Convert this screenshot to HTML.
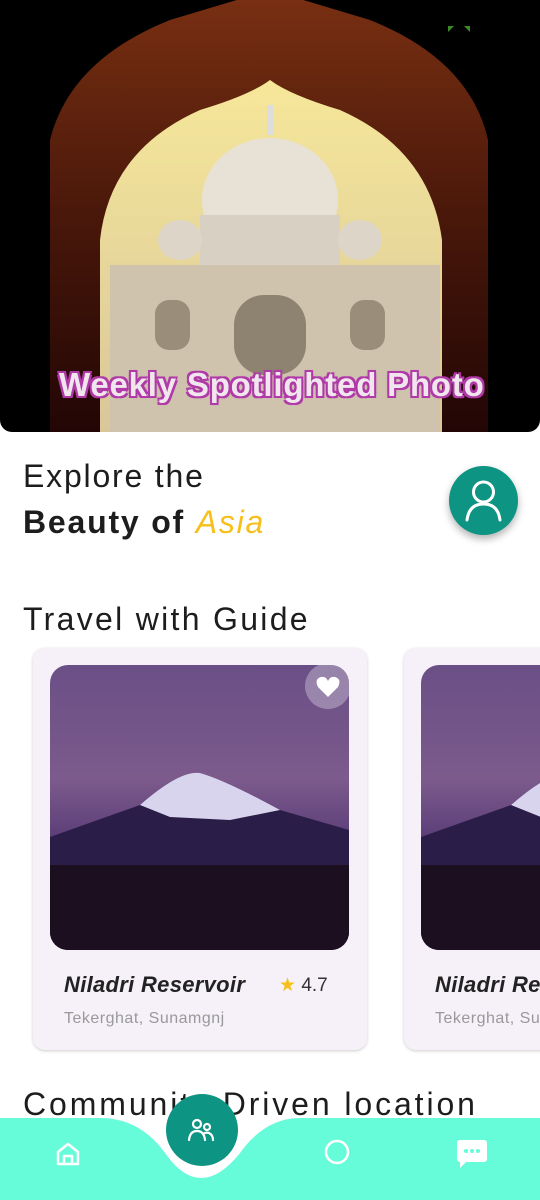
<!DOCTYPE html>
<html><head><meta charset="utf-8"><style>
*{margin:0;padding:0;box-sizing:border-box}
html,body{width:540px;height:1200px;overflow:hidden}
body{background:#fff;font-family:"Liberation Sans",sans-serif;position:relative}
.wrap{position:absolute;left:0;top:0;width:540px;height:1200px;overflow:hidden}
.hero{position:absolute;left:0;top:0;width:540px;height:432px;background:#000;border-radius:0 0 12px 12px;overflow:hidden}
.t{position:absolute;color:#1d1d1d;letter-spacing:1.8px}
.card{position:absolute;top:648px;width:334px;height:402px;background:#f6f0f8;border-radius:12px;box-shadow:0 1px 3px rgba(0,0,0,.2);overflow:hidden}
.img{position:absolute;left:17px;top:17px;width:299px;height:285px;border-radius:18px;overflow:hidden;background:linear-gradient(#6a4f86 0%,#7c5a8c 40%,#5d3f79 60%,#24163a 75%,#1a0f22 100%)}
</style></head><body><div class="wrap">
<div class="hero">
<svg width="540" height="432" viewBox="0 0 540 432">
<defs>
<linearGradient id="sky" x1="0" y1="0" x2="0" y2="1"><stop offset="0" stop-color="#f6e79a"/><stop offset="1" stop-color="#d9c79a"/></linearGradient>
<linearGradient id="arch" x1="0" y1="0" x2="0" y2="1"><stop offset="0" stop-color="#7a3012"/><stop offset="0.5" stop-color="#4a180a"/><stop offset="1" stop-color="#220605"/></linearGradient>
</defs>
<path d="M50 432 L50 140 Q70 60 170 20 L270 -10 L370 20 Q470 60 488 140 L488 432 Z" fill="url(#arch)"/>
<path d="M100 432 L100 240 Q110 150 200 110 Q250 95 270 80 Q290 95 340 110 Q430 150 442 240 L442 432 Z" fill="url(#sky)"/>
<rect x="110" y="265" width="330" height="167" fill="#cfc3ae"/>
<ellipse cx="270" cy="200" rx="68" ry="62" fill="#e8e2d6"/>
<rect x="200" y="215" width="140" height="50" fill="#d8d0c2"/>
<ellipse cx="180" cy="240" rx="22" ry="20" fill="#ddd6c8"/>
<ellipse cx="360" cy="240" rx="22" ry="20" fill="#ddd6c8"/>
<rect x="234" y="295" width="72" height="80" rx="30" fill="#8e8270"/>
<rect x="155" y="300" width="35" height="50" rx="14" fill="#9a8e7a"/>
<rect x="350" y="300" width="35" height="50" rx="14" fill="#9a8e7a"/>
<rect x="267" y="105" width="6" height="30" fill="#ddd"/>
<path d="M448 26 l6 0 -6 6z M470 26 l-6 0 6 6z" fill="#3a8a2a"/>
</svg>
<div style="position:absolute;left:59px;top:366px;font-size:33px;font-weight:bold;color:#f2e6ee;letter-spacing:0.8px;text-shadow:0 0 3px #b03aa8,2px 2px 0 #b03aa8,-2px -2px 0 #b03aa8,2px -2px 0 #b03aa8,-2px 2px 0 #b03aa8">Weekly Spotlighted Photo</div>
</div>
<div class="t" style="left:23px;top:458px;font-size:32px">Explore the</div>
<div class="t" style="left:23px;top:504px;font-size:32px;font-weight:bold">Beauty of <i style="color:#f8bf1a;font-weight:normal">Asia</i></div>
<div style="position:absolute;left:449px;top:466px;width:69px;height:69px;border-radius:50%;background:#0e9483;box-shadow:0 4px 8px rgba(0,0,0,.3)">
<svg width="69" height="69"><circle cx="34.5" cy="26" r="10" fill="none" stroke="#fff" stroke-width="3"/><path d="M18 54 Q20 38 34.5 38 Q49 38 51 54" fill="none" stroke="#fff" stroke-width="3" stroke-linecap="round"/></svg></div>
<div class="t" style="left:23px;top:601px;font-size:32px;letter-spacing:2.3px">Travel with Guide</div>
<div class="card" style="left:33px"><div class="img">
<svg width="299" height="285"><path d="M0 172 L90 140 Q130 105 150 108 Q175 115 230 145 L299 165 L299 285 L0 285Z" fill="#2a1e48"/><path d="M90 140 Q130 105 150 108 Q175 115 230 145 L180 155 L120 152Z" fill="#d9d4ee"/><rect y="200" width="299" height="85" fill="#1c1020"/><circle cx="278" cy="21" r="23" fill="rgba(255,255,255,.3)"/><path d="M278 32 L268 22 Q264 14 271 12 Q276 11 278 16 Q280 11 285 12 Q292 14 288 22Z" fill="#fff"/></svg></div>
<div style="position:absolute;left:31px;top:324px;font-size:22px;font-weight:bold;font-style:italic;color:#222;letter-spacing:0.3px">Niladri Reservoir</div>
<div style="position:absolute;left:246px;top:326px;font-size:19px;color:#333"><span style="color:#f8bf1a">★</span> 4.7</div>
<div style="position:absolute;left:31px;top:362px;font-size:16px;color:#999;letter-spacing:0.5px">Tekerghat, Sunamgnj</div>
</div>
<div class="card" style="left:404px"><div class="img">
<svg width="299" height="285"><path d="M0 172 L90 140 Q130 105 150 108 Q175 115 230 145 L299 165 L299 285 L0 285Z" fill="#2a1e48"/><path d="M90 140 Q130 105 150 108 Q175 115 230 145 L180 155 L120 152Z" fill="#d9d4ee"/><rect y="200" width="299" height="85" fill="#1c1020"/></svg></div>
<div style="position:absolute;left:31px;top:324px;font-size:22px;font-weight:bold;font-style:italic;color:#222;letter-spacing:0.3px">Niladri Reservoir</div>
<div style="position:absolute;left:31px;top:362px;font-size:16px;color:#999;letter-spacing:0.5px">Tekerghat, Sunamgnj</div>
</div>
<div class="t" style="left:23px;top:1086px;font-size:32px;letter-spacing:2.9px">Community Driven location</div>
<svg style="position:absolute;left:0;top:1118px" width="540" height="82"><path d="M0 0 L100 0 Q140 0 165 35 Q200 85 240 35 Q265 0 300 0 L540 0 L540 82 L0 82Z" fill="#66fcd9"/>
<path d="M58 46 L58 34 L68 26 L78 34 L78 46 Z M64 46 L64 38 L72 38 L72 46" fill="none" stroke="#fff" stroke-width="2.5" stroke-linejoin="round"/>
<circle cx="337" cy="34" r="11" fill="none" stroke="#fff" stroke-width="2.5"/>
<path d="M460 22 h24 a3 3 0 0 1 3 3 v16 a3 3 0 0 1 -3 3 h-18 l-6 6 v-6 a3 3 0 0 1 -3 -3 v-16 a3 3 0 0 1 3 -3z" fill="#fff"/>
<circle cx="466" cy="33" r="2" fill="#66fcd9"/><circle cx="472" cy="33" r="2" fill="#66fcd9"/><circle cx="478" cy="33" r="2" fill="#66fcd9"/></svg>
<div style="position:absolute;left:166px;top:1094px;width:72px;height:72px;border-radius:50%;background:#0e9483">
<svg width="72" height="72"><circle cx="31" cy="30" r="4" fill="none" stroke="#fff" stroke-width="2.2"/><circle cx="41" cy="33" r="3" fill="none" stroke="#fff" stroke-width="2.2"/><path d="M23 46 Q24 37 31 37 Q38 37 39 46 M37 40 Q40 38 43 39 Q47 41 47 46" fill="none" stroke="#fff" stroke-width="2.2" stroke-linecap="round"/></svg></div>
</div></body></html>
